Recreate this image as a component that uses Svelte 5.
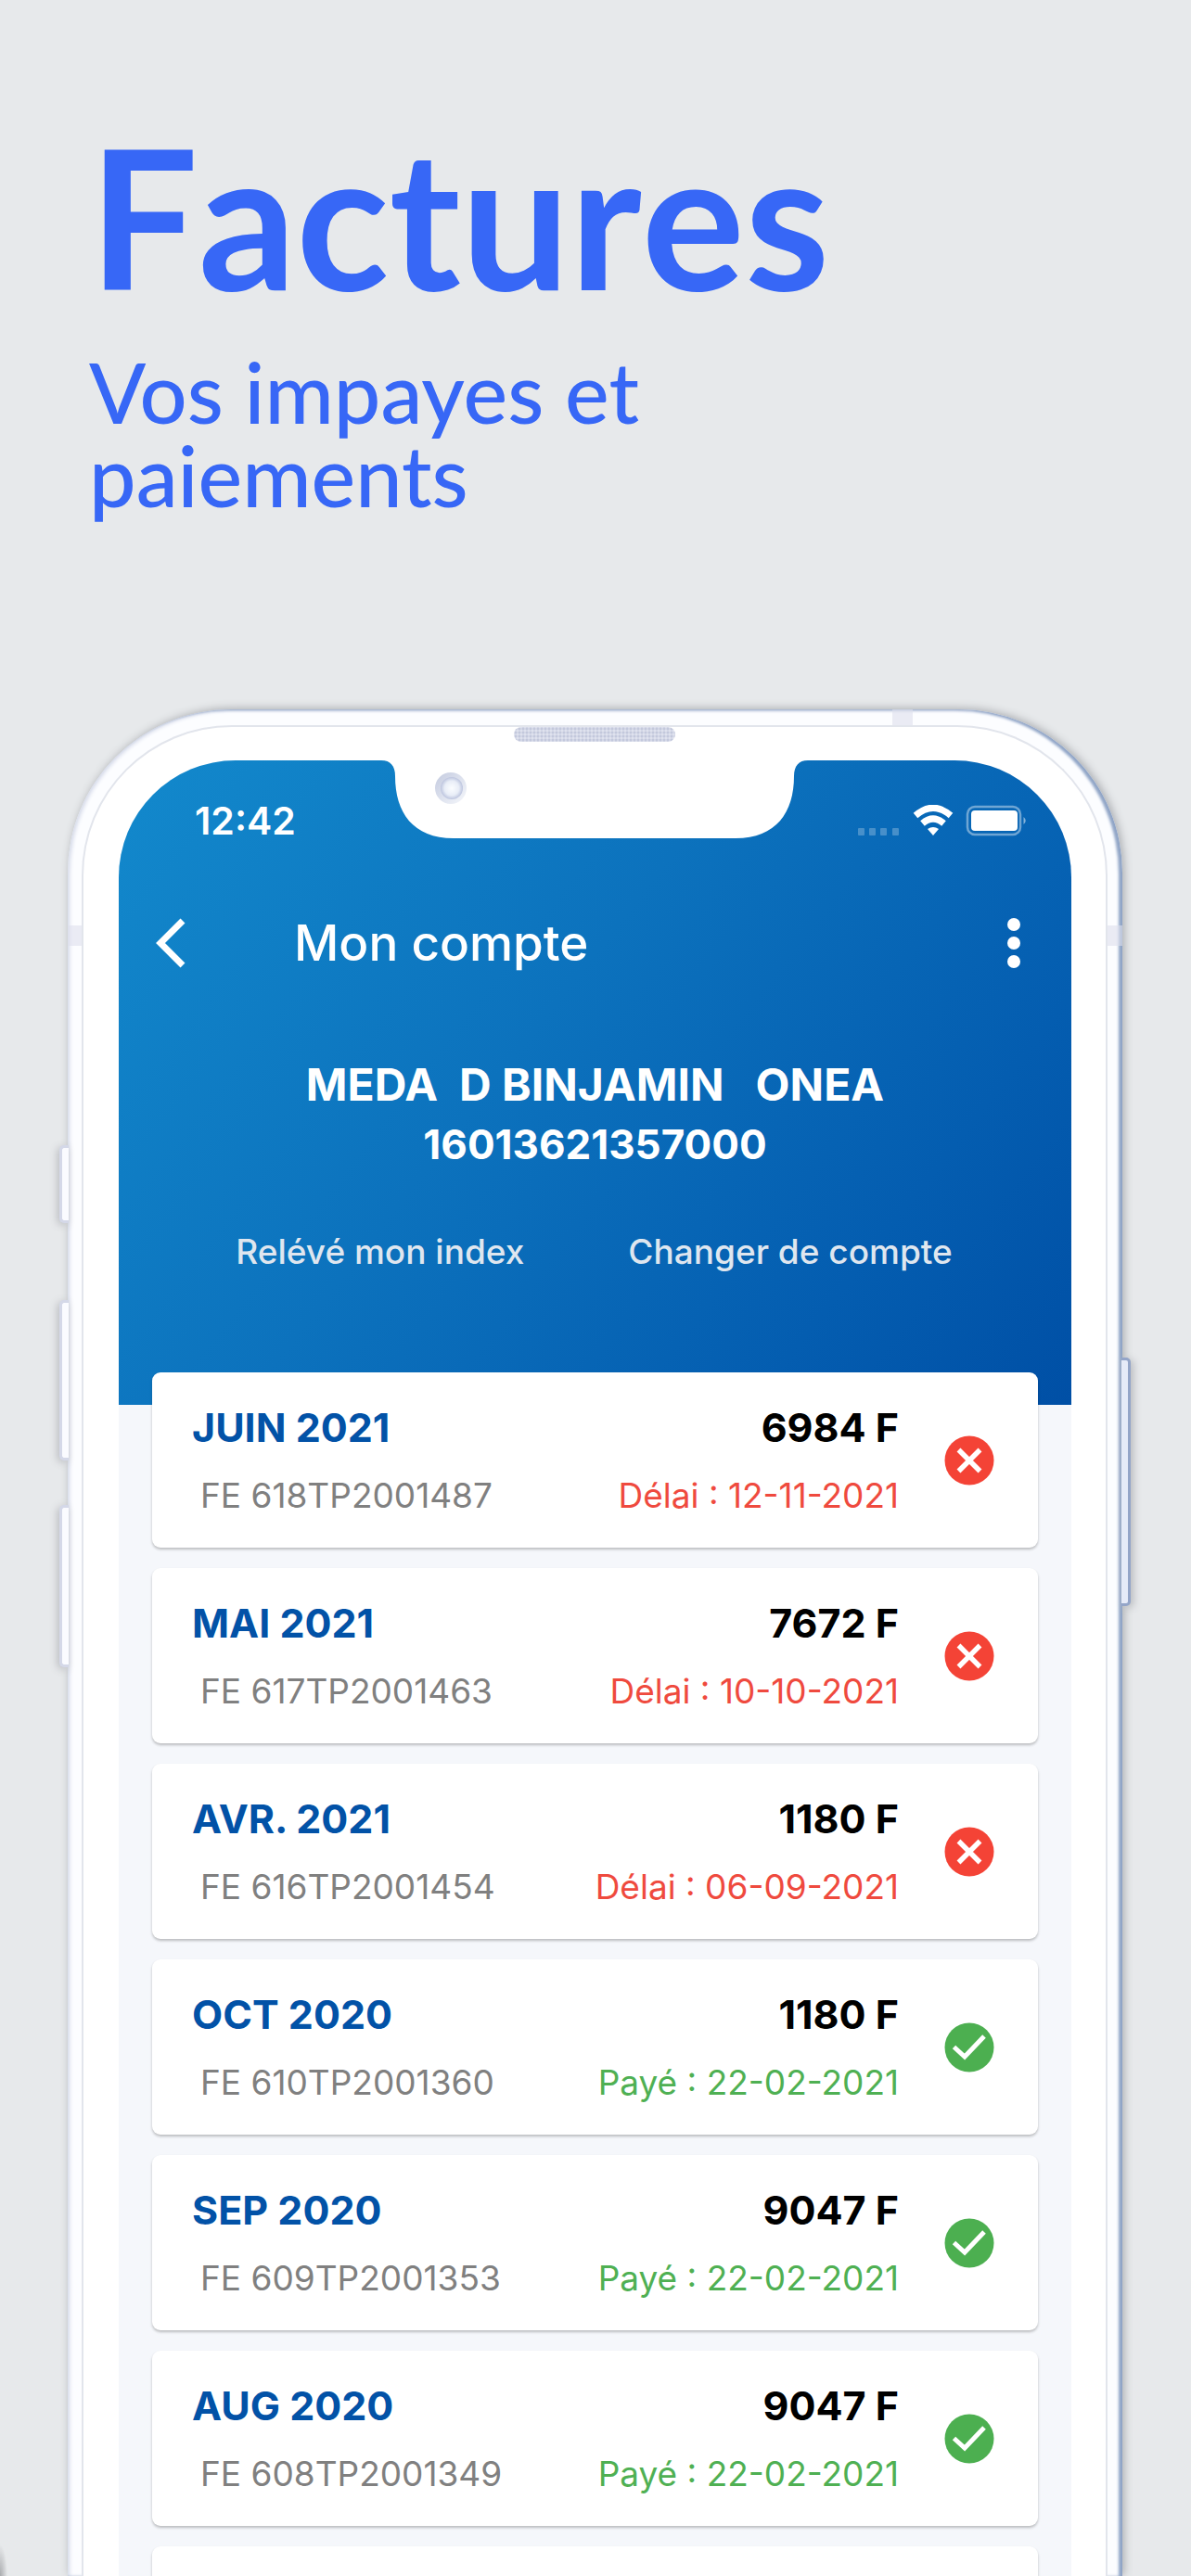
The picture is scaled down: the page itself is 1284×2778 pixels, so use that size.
<script>
  const account = { name: 'MEDA  D BINJAMIN   ONEA', number: '16013621357000' };

  const invoices = [
    { month: 'JUIN 2021', ref: 'FE 618TP2001487', amount: '6984 F', date: '12-11-2021', paid: false },
    { month: 'MAI 2021', ref: 'FE 617TP2001463', amount: '7672 F', date: '10-10-2021', paid: false },
    { month: 'AVR. 2021', ref: 'FE 616TP2001454', amount: '1180 F', date: '06-09-2021', paid: false },
    { month: 'OCT 2020', ref: 'FE 610TP2001360', amount: '1180 F', date: '22-02-2021', paid: true },
    { month: 'SEP 2020', ref: 'FE 609TP2001353', amount: '9047 F', date: '22-02-2021', paid: true },
    { month: 'AUG 2020', ref: 'FE 608TP2001349', amount: '9047 F', date: '22-02-2021', paid: true }
  ];
</script>

<div class="page">
  <header class="intro">
    <h1>Factures</h1>
    <p>Vos impayes et paiements</p>
  </header>

  <div class="phone">
    <span class="key key-mute"></span>
    <span class="key key-up"></span>
    <span class="key key-down"></span>
    <span class="key key-power"></span>
    <span class="band band-top"></span>
    <span class="band band-left"></span>
    <span class="band band-right"></span>

    <div class="bezel">
      <span class="speaker"></span>
      <svg class="notch" width="460" height="86" viewBox="0 0 460 86" aria-hidden="true">
        <defs>
          <linearGradient id="ring" x1="0" y1="0" x2="1" y2="1">
            <stop offset="0" stop-color="#c3cadf" />
            <stop offset="1" stop-color="#f6f8fc" />
          </linearGradient>
          <radialGradient id="lens">
            <stop offset="0" stop-color="#fbfdff" />
            <stop offset=".65" stop-color="#e8edf7" />
            <stop offset="1" stop-color="#bcc4de" />
          </radialGradient>
        </defs>
        <path d="M0 0V2C10 2 15 8 15 19C15 58 34 86 78 86H382C426 86 445 58 445 19C445 8 450 2 460 2V0Z" fill="#fff" />
        <circle cx="75" cy="32" r="17" fill="url(#ring)" />
        <circle cx="76" cy="32" r="12" fill="url(#lens)" />
      </svg>

      <main class="screen">
        <div class="top">
          <div class="status">
            <span class="clock">12:42</span>
            <svg class="signals" width="184" height="34" viewBox="0 0 184 34" aria-hidden="true">
              <g fill="#fff" opacity=".25">
                <rect x="1" y="25" width="7" height="8" rx="1" />
                <rect x="13" y="25" width="7" height="8" rx="1" />
                <rect x="25" y="25" width="7" height="8" rx="1" />
                <rect x="38" y="25" width="7" height="8" rx="1" />
              </g>
              <g fill="none" stroke="#fff" stroke-width="7">
                <path d="M63 11.500Q82 -5 101 11.500" />
                <path d="M70.500 20Q82 10 93.500 20" />
              </g>
              <path d="M76 26Q82 22 88 26L82 33Z" fill="#fff" />
              <rect x="119" y="2" width="57" height="30" rx="8" fill="none" stroke="#fff" stroke-opacity=".42" stroke-width="2.500" />
              <rect x="123" y="6" width="50" height="22" rx="4" fill="#fff" />
              <path d="M179.500 13Q184 17 179.500 21Z" fill="#fff" opacity=".5" />
            </svg>
          </div>

          <nav class="appbar">
            <button type="button" aria-label="Retour">
              <svg width="40" height="56" viewBox="0 0 40 56" aria-hidden="true">
                <path d="M33 4L9 28L33 52" fill="none" stroke="#fff" stroke-width="7" />
              </svg>
            </button>
            <h2>Mon compte</h2>
            <button type="button" aria-label="Menu">
              <svg width="20" height="56" viewBox="0 0 20 56" aria-hidden="true">
                <g fill="#fff">
                  <circle cx="10" cy="8" r="7" />
                  <circle cx="10" cy="28" r="7" />
                  <circle cx="10" cy="48" r="7" />
                </g>
              </svg>
            </button>
          </nav>

          <div class="account">
            <strong class="name">{account.name}</strong>
            <span class="number">{account.number}</span>
          </div>

          <div class="actions">
            <button type="button">Relévé mon index</button>
            <button type="button">Changer de compte</button>
          </div>
        </div>

        <ul class="list">
          {#each invoices as invoice}
            <li class="card">
              <div class="left">
                <h3>{invoice.month}</h3>
                <span class="ref">{invoice.ref}</span>
              </div>
              <div class="right">
                <b>{invoice.amount}</b>
                <span class:paid={invoice.paid} class="due">{invoice.paid ? 'Payé' : 'Délai'} : {invoice.date}</span>
              </div>
              <svg width="54" height="54" viewBox="0 0 54 54" aria-hidden="true">
                {#if invoice.paid}
                  <circle cx="27" cy="27" r="26.500" fill="#4caf50" />
                  <path d="M10.500 26.500L22 37L43 15" fill="none" stroke="#fff" stroke-width="5" />
                {:else}
                  <circle cx="27" cy="27" r="26.500" fill="#f44336" />
                  <path d="M15.500 15.500L38.500 38.500M38.500 15.500L15.500 38.500" fill="none" stroke="#fff" stroke-width="5.500" />
                {/if}
              </svg>
            </li>
          {/each}
          <li class="card next"></li>
        </ul>
      </main>
    </div>
  </div>
</div>

<style>
  :global(body) {
    background: #e7e9eb;
  }

  .page {
    position: relative;
    display: flex;
    flex-direction: column;
    box-sizing: border-box;
    min-height: 100vh;
    padding: 129px 74px 0 73px;
    overflow: hidden;
    background: radial-gradient(ellipse 8px 34px at 0 100%, #a9abae, #e7e9eb00) #e7e9eb;
    font-family: Inter, "Noto Sans", sans-serif;
  }

  h1, h2, h3, p, ul {
    margin: 0;
    padding: 0;
  }

  button {
    padding: 0;
    border: 0;
    background: none;
    color: inherit;
    font: inherit;
  }

  .intro {
    display: flex;
    flex-direction: column;
    gap: 40px;
    max-width: 860px;
    margin-bottom: 208px;
    padding-left: 23px;
    color: #3767f6;
    font-family: Lato, sans-serif;
  }

  .intro h1 {
    font-size: 208px;
    font-weight: 700;
    font-kerning: none;
    line-height: 208px;
  }

  .intro p {
    max-width: 700px;
    font-size: 90px;
    font-weight: 500;
    line-height: 90px;
  }

  .phone {
    position: relative;
    display: flex;
    flex: 1;
    padding: 17px 16px 0 15px;
    border-radius: 176px 176px 0 0;
    background: #fcfdff;
    box-shadow:
      inset -4px 1px 3px #8fa4c6,
      inset 2px 1px 4px #d3d8e8,
      2px -1px 10px #a9acb0;
  }

  .bezel {
    position: relative;
    display: flex;
    flex: 1;
    padding: 36px 37px 0 38px;
    border: 2px solid #e2e5ec;
    border-bottom: 0;
    border-radius: 162px 162px 0 0;
    background: #fff;
  }

  .key {
    position: absolute;
    left: -9px;
    box-sizing: border-box;
    width: 10px;
    border: 3px solid #d4d8e8;
    border-right: 0;
    border-radius: 5px 0 0 5px;
    background: #fafbff;
    box-shadow: -2px 2px 8px #b9bbbf;
  }

  .key-mute { top: 470px; height: 84px; }
  .key-up { top: 637px; height: 173px; }
  .key-down { top: 858px; height: 175px; }

  .key-power {
    top: 699px;
    right: -9px;
    left: auto;
    height: 268px;
    border: 3px solid #94a5c8;
    border-left: 0;
    border-radius: 0 5px 5px 0;
    background: #e6ebf8;
    box-shadow: 3px 2px 8px #b9bbbf;
  }

  .band {
    position: absolute;
    background: #dde0ec99;
  }

  .band-top { top: 0; right: 226px; width: 22px; height: 17px; }
  .band-left { top: 233px; left: 0; width: 15px; height: 22px; }
  .band-right { top: 233px; right: 0; width: 16px; height: 22px; }

  .speaker {
    position: absolute;
    top: 0;
    left: 50%;
    width: 174px;
    height: 16px;
    border-radius: 8px;
    background: radial-gradient(circle, #c3c8dc 1px, #dfe2ee 2px) 0 0 / 4px 4px;
    transform: translateX(-50%);
  }

  .notch {
    position: absolute;
    top: 34px;
    left: 50%;
    z-index: 1;
    transform: translateX(-50%);
  }

  .screen {
    display: flex;
    flex: 1;
    flex-direction: column;
    min-width: 0;
    border-radius: 126px 126px 0 0;
    background: #f5f7fb;
    overflow: hidden;
  }

  .top {
    padding-bottom: 135px;
    background: linear-gradient(128deg, #1287cb 4%, #0c72bd 43%, #045db0 78%, #004fa5);
    color: #fff;
  }

  .status {
    display: flex;
    align-items: center;
    justify-content: space-between;
    height: 130px;
    padding: 0 47px 0 82px;
  }

  .clock {
    font-size: 41px;
    font-weight: 600;
  }

  .appbar {
    display: flex;
    align-items: center;
    height: 134px;
    padding: 0 30px 0 24px;
  }

  .appbar button {
    display: grid;
    place-items: center;
    width: 64px;
    height: 64px;
  }

  .appbar h2 {
    flex: 1;
    margin-left: 101px;
    font-size: 53px;
    font-weight: 500;
  }

  .account {
    display: flex;
    flex-direction: column;
    align-items: center;
    margin: 53px 0;
    font-weight: 700;
    line-height: 65px;
  }

  .name {
    font-size: 48px;
    font-weight: 700;
    white-space: pre;
  }

  .number {
    font-size: 44px;
  }

  .actions {
    display: flex;
    justify-content: center;
    gap: 112px;
    padding-right: 2px;
    color: #dfe6ef;
    font-size: 37px;
    font-weight: 500;
    line-height: 60px;
  }

  .list {
    display: flex;
    flex: 1;
    flex-direction: column;
    gap: 22px;
    margin-top: -35px;
    padding: 0 36px;
    list-style: none;
  }

  .card {
    display: flex;
    align-items: center;
    box-sizing: border-box;
    min-height: 189px;
    padding: 0 47px 0 43px;
    border-radius: 9px;
    background: #fff;
    box-shadow: 0 2px 3px #0000003d;
    line-height: 73px;
  }

  .next {
    flex: 1;
    min-height: 32px;
    border-radius: 9px 9px 0 0;
  }

  .left {
    display: flex;
    flex: 1;
    flex-direction: column;
  }

  .right {
    display: flex;
    flex-direction: column;
    align-items: flex-end;
    margin-right: 49px;
  }

  .left, .right {
    padding-top: 2px;
  }

  h3, b {
    font-size: 43px;
    font-weight: 700;
  }

  h3 {
    color: #0252a7;
  }

  b {
    color: #000;
  }

  .ref {
    padding-left: 9px;
    color: #808080;
    font-size: 37px;
  }

  .due {
    color: #ef4a3e;
    font-size: 37px;
  }

  .paid {
    color: #4fb053;
  }
</style>
